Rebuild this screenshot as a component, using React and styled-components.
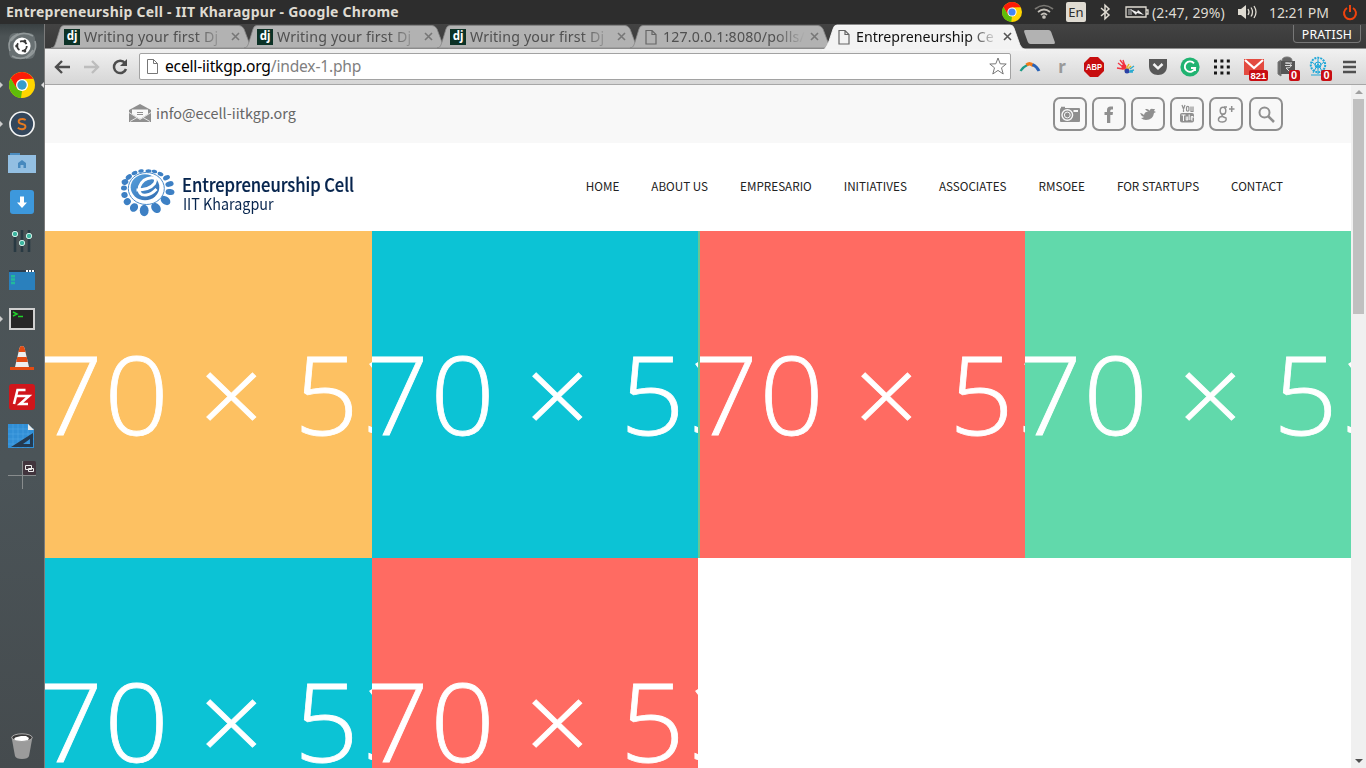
import React from "react";
import styled, { createGlobalStyle } from "styled-components";

const Global = createGlobalStyle`
  * { box-sizing: border-box; }
  body { margin: 0; overflow: hidden; }
  svg { display: block; flex: none; overflow: visible; }
`;

const ui = `"Noto Sans", "Open Sans", sans-serif`;
const site = `"Noto Sans CJK SC", "Noto Sans", sans-serif`;

const Screen = styled.div`
  width: 1366px;
  height: 768px;
  display: grid;
  grid-template: 24px 744px / 45px 1321px;
  overflow: hidden;
  background: #fff;
  font-family: ${ui};
`;

const MenuBar = styled.header`
  grid-column: 1 / 3;
  display: flex;
  align-items: center;
  background: #2d2d2d;
  color: #dfdbd2;
  white-space: nowrap;
`;
const WindowTitle = styled.div`
  font-size: 14px;
  font-weight: 700;
  line-height: 24px;
  padding-left: 6px;
  width: 1002px;
  letter-spacing: 0.25px;
`;
const Indicator = styled.div`
  display: flex;
  align-items: center;
  width: ${(p) => p.$w}px;
  height: 24px;
  flex: none;
  font-size: 14px;
  letter-spacing: ${(p) => p.$ls || 0}px;
`;
const Keyboard = styled.span`
  width: 20px;
  height: 20px;
  border-radius: 2px;
  background: #dfdbd2;
  color: #2d2d2d;
  font-size: 13px;
  line-height: 20px;
  text-align: center;
`;

const Launcher = styled.nav`
  display: flex;
  flex-direction: column;
  align-items: center;
  padding: 2px 0 3px;
  background: linear-gradient(#394042, #4c5355 12px, #4b5458 60%, #454b4e);
  border-right: 1px solid #7b7b7b;
`;
const LaunchItem = styled.div`
  position: relative;
  width: 44px;
  height: 39px;
  display: flex;
  align-items: center;
  justify-content: center;
  margin-top: ${(p) => (p.$last ? "auto" : 0)};
`;
const Marker = styled.i`
  position: absolute;
  top: 17px;
  ${(p) => (p.$right ? "right: 0; border-right: 3px solid #ddd;" : "left: 0; border-left: 3px solid #ccc;")}
  border-top: 3px solid transparent;
  border-bottom: 3px solid transparent;
`;

const Browser = styled.main`
  display: flex;
  flex-direction: column;
  min-width: 0;
`;
const TabStrip = styled.div`
  height: 25px;
  display: flex;
  background: linear-gradient(#434343, #393939);
  padding: 1px 5px 0 6px;
  border-bottom: 1px solid #8f8f8f;
`;
const TabBox = styled.div`
  position: relative;
  z-index: ${(p) => (p.$active ? 2 : 1)};
  width: 193px;
  flex: none;
  height: ${(p) => (p.$active ? 25 : 24)}px;
`;
const TabShape = styled.svg`
  position: absolute;
  left: 0;
  top: 0;
`;
const TabBody = styled.div`
  position: relative;
  display: flex;
  align-items: center;
  height: 23px;
  padding-left: 13px;
`;
const TabLabel = styled.span`
  width: 147px;
  margin-left: 4px;
  overflow: hidden;
  white-space: nowrap;
  font-size: 14.2px;
  line-height: 22px;
  letter-spacing: ${(p) => (p.$active ? 0 : 0.17)}px;
  color: ${(p) => (p.$active ? "#111" : "#505050")};
  mask-image: linear-gradient(90deg, #000 112px, transparent 142px);
`;
const NewTab = styled.div`
  width: 27px;
  height: 14px;
  margin: 5px 0 0 10px;
  background: #b2b2b2;
  border-radius: 2px;
  transform: skewX(20deg);
`;
const User = styled.div`
  margin-left: auto;
  width: 68px;
  height: 18px;
  border: 1px solid #777;
  border-top: 0;
  border-radius: 0 0 4px 4px;
  color: #fff;
  font-size: 12.3px;
  line-height: 20px;
  text-align: center;
  letter-spacing: 0.2px;
`;

const Toolbar = styled.div`
  height: 36px;
  display: flex;
  align-items: center;
  background: linear-gradient(#f1f1f1, #d6d6d6);
  border-bottom: 1px solid #a7a7a7;
  padding-left: 9px;
`;
const NavButtons = styled.div`
  display: flex;
  gap: 12px;
  width: 85px;
`;
const UrlBar = styled.div`
  width: 872px;
  height: 27px;
  margin-top: -1px;
  display: flex;
  align-items: center;
  border: 1px solid #a2a2a2;
  border-radius: 2px;
  background: #fff;
  padding: 0 3px 0 7px;
`;
const Url = styled.span`
  flex: 1;
  margin-left: 7px;
  font-size: 15.6px;
  line-height: 24px;
  letter-spacing: -0.19px;
  color: #808080;
  b { font-weight: 400; color: #000; }
`;
const Extensions = styled.div`
  display: grid;
  grid-template-columns: repeat(10, 32px);
  justify-items: center;
  margin: 0 9px 0 3px;
  align-items: center;
  height: 34px;
  flex: none;
`;
const Extension = styled.div`
  position: relative;
  display: flex;
  color: #999;
  font-size: 17px;
  font-weight: 700;
  line-height: 20px;
`;
const Count = styled.span`
  position: absolute;
  left: ${(p) => p.$x}px;
  bottom: ${(p) => p.$b}px;
  min-width: 11px;
  height: 11px;
  padding: 0 1.5px;
  border-radius: 2px;
  background: #c80d12;
  color: #fff;
  font: 700 ${(p) => p.$fs}px/11px "Liberation Sans", sans-serif;
  text-align: center;
`;

const Viewport = styled.div`
  display: flex;
  flex: 1;
  min-height: 0;
`;
const Page = styled.div`
  width: 1306px;
  overflow: hidden;
  font-family: ${site};
`;
const TopBar = styled.div`
  height: 58px;
  padding: 0 68px 0 84px;
  display: flex;
  align-items: center;
  background: #f8f8f8;
  color: #666;
`;
const Email = styled.span`
  margin-left: 5px;
  flex: 1;
  font-size: 14.4px;
  line-height: 22px;
  margin-top: -2px;
`;
const SocialLinks = styled.div`
  display: flex;
  gap: 5px;
`;
const Social = styled.span`
  width: 34px;
  height: 34px;
  border: 2px solid #8f8f8f;
  border-radius: 7px;
  display: flex;
  align-items: center;
  justify-content: center;
  margin-left: ${(p) => (p.$apart ? 1 : 0)}px;
`;
const SiteHeader = styled.div`
  height: 88px;
  display: flex;
  padding: 26px 68px 0 76px;
`;
const Brand = styled.div`
  flex: 1;
  display: flex;
  color: #06244d;
`;
const BrandText = styled.div`
  margin: 3px 0 0 7px;
  white-space: nowrap;
  transform: scaleX(0.895);
  transform-origin: 0 0;
`;
const BrandName = styled.div`
  font-size: 18.6px;
  font-weight: 500;
  line-height: 24px;
  letter-spacing: -0.1px;
  -webkit-text-stroke: 0.2px #06244d;
`;
const BrandPlace = styled.div`
  font-size: 16px;
  line-height: 18px;
  margin: -2px 0 0 1px;
`;
const Menu = styled.div`
  display: flex;
  gap: 32px;
  padding-top: 8px;
  font-size: 11.7px;
  line-height: 17px;
  color: #222;
  white-space: nowrap;
`;
const Tiles = styled.div`
  display: grid;
  grid-template-columns: repeat(4, 326.5px);
  grid-auto-rows: 326.5px;
`;
const Tile = styled.div`
  overflow: hidden;
  background: ${(p) => p.$bg};
  border-left: ${(p) => (p.$edge ? "2px solid #6cc592" : "0")};
`;
const TileSize = styled.div`
  width: 380px;
  margin-left: -73.5px;
  color: #fff;
  font: 300 109px/324px "Open Sans", sans-serif;
  white-space: pre;
  letter-spacing: 1.4px;
  word-spacing: -2.2px;
  -webkit-text-stroke: 0.8px #fff;
  transform: scaleX(1.04);
  transform-origin: 0 0;
  span { margin-left: 3.5px; }
`;
const Scrollbar = styled.div`
  width: 15px;
  display: flex;
  flex-direction: column;
  align-items: center;
  background: #f0f0f0;
  padding: 5px 0;
`;
const Arrow = styled.i`
  border: 4px solid transparent;
  border-top-width: ${(p) => (p.$down ? 4 : 0)}px;
  border-bottom-width: ${(p) => (p.$down ? 0 : 4)}px;
  border-${(p) => (p.$down ? "top" : "bottom")}-color: ${(p) => (p.$down ? "#505050" : "#a0a0a0")};
`;
const Thumb = styled.div`
  width: 11px;
  height: 215px;
  margin: 5px 0 auto 0;
  background: #c0c0c0;
`;

const Chrome = ({ s, mid = "#4286f5" }) => (
  <svg width={s} height={s} viewBox="0 0 26 26">
    <circle cx="13" cy="13" r="13" fill="#ffd500" />
    <path d="M13 13 7.5 16.5 1.8 6.5A13 13 0 0 1 24.3 6.7L13 7Z" fill="#fb1b08" />
    <path d="M1.8 6.5 7.6 16.2 13 19 12 26A13 13 0 0 1 1.8 6.5Z" fill="#5fbd0a" />
    <circle cx="13" cy="13" r="6" fill="#fff" />
    <circle cx="13" cy="13" r="4.7" fill={mid} />
  </svg>
);

const Doc = ({ c = "#666" }) => (
  <svg width="16" height="16" viewBox="0 0 16 16" fill="none" stroke={c} strokeWidth="1.2">
    <path d="M3 1.5h6l4 4V15H3ZM9 1.5v4h4" />
  </svg>
);
const DjangoMark = styled.span`
  width: 16px;
  height: 16px;
  flex: none;
  background: #0c3226;
  color: #fff;
  font: 700 11.5px/14px "Noto Sans", sans-serif;
  text-align: center;
`;
const Tab = ({ label, dj, active }) => (
  <TabBox $active={active}>
    <TabShape width="208" height="25" viewBox="0 0 208 25">
      <path
        d={active
          ? "M-1 25C3 24 4 21 6 16L10 4Q11 0 14 0H187Q190 0 191 3L197 20Q199 24 203 25Z"
          : "M0 23C3 23 4 20 5 17L9 4Q10 0.5 13 0.5H188Q191 .5 193 4L199 20Q200 23 204 23Z"}
        fill={active ? "#f3f3f3" : "#b2b2b2"}
        stroke={active ? "#f8f8f8" : "#878787"}
        strokeWidth=".8"
      />
    </TabShape>
    <TabBody>
      {dj ? <DjangoMark>dj</DjangoMark> : <Doc />}
      <TabLabel $active={active}>{label}</TabLabel>
      <svg width="9" height="9" viewBox="0 0 9 9" stroke={active ? "#555" : "#777"} strokeWidth="1.6">
        <path d="M1 1 8 8M8 1 1 8" />
      </svg>
    </TabBody>
  </TabBox>
);

const launchers = [
  { icon: (
    <svg width="28" height="28" viewBox="0 0 28 28">
      <rect x="1" y="1" width="26" height="26" rx="6" fill="#687072" />
      <path d="M3 9Q12-3 25 4M25 18Q17 31 4 24M2 19Q-2 7 10 2M27 9Q30 21 18 26" fill="none" stroke="#92999a" strokeWidth="1.6" />
      <circle cx="14" cy="14" r="8.6" fill="#fff" />
      <circle cx="14" cy="14" r="4.8" fill="none" stroke="#393939" strokeWidth="1.8" strokeDasharray="7.5 2.5" />
      <circle cx="8.7" cy="14" r="1.5" fill="#393939" /><circle cx="16.8" cy="9" r="1.5" fill="#393939" /><circle cx="16.8" cy="19" r="1.5" fill="#393939" />
    </svg>) },
  { left: true, right: true, icon: <Chrome s={26} mid="#369dcc" /> },
  { left: true, icon: (
    <svg width="26" height="26" viewBox="0 0 26 26">
      <circle cx="13" cy="13" r="12" fill="#34475c" stroke="#f4f4f4" strokeWidth="1.7" />
      <path d="M16.7 9Q14.7 7.8 12.8 8C8.5 8.3 8.8 12 12.4 12.8C18.5 14 17 18.2 13 18.2Q10.5 18.2 8.8 16.7" fill="none" stroke="#e67a20" strokeWidth="1.9" />
    </svg>) },
  { icon: (
    <svg width="28" height="22" viewBox="0 0 28 22">
      <path d="M2 1h10v4H2Z" fill="#4b8cbf" /><path d="M0 3h28v18H0Z" fill="#93bfe2" />
      <path d="M14 8 18 11V16H15.5V13H12.5V16H10V11Z" fill="#4789be" />
    </svg>) },
  { icon: (
    <svg width="24" height="24" viewBox="0 0 24 24">
      <rect width="24" height="24" rx="3" fill="#3d98dc" />
      <path d="M10 6.5h4v6h3L12 18 7 12.5h3Z" fill="#fff" />
    </svg>) },
  { icon: (
    <svg width="22" height="24" viewBox="0 0 22 24">
      <path d="M4 1v22M11 1v22M18 1v22" stroke="#293a43" strokeWidth="2.6" />
      <g fill="#3cb6a0" stroke="#d3eee7" strokeWidth="1"><circle cx="4" cy="5" r="2.7" /><circle cx="11" cy="14" r="2.7" /><circle cx="18" cy="7" r="2.7" /></g>
    </svg>) },
  { icon: (
    <svg width="26" height="20" viewBox="0 0 26 20">
      <path d="M0 0h26v20H0Z" fill="#2a80bd" /><path d="M0 0h26v2H0Z" fill="#2e3d4b" />
      <path d="M17 1h2M20 1h2M23 1h2" stroke="#fff" strokeWidth="2" />
      <path d="M2 6.2h4M2 9.5h4M2 13h4" stroke="#22b99c" strokeWidth="2.4" />
    </svg>) },
  { left: true, icon: (
    <svg width="26" height="22" viewBox="0 0 26 22">
      <path d="M1 1h24v20H1Z" fill="#262626" stroke="#d0d0d0" strokeWidth="2" />
      <path d="M4 4 8 6 4 8M9 8.5h5" fill="none" stroke="#20d12b" strokeWidth="1.5" />
    </svg>) },
  { icon: (
    <svg width="24" height="24" viewBox="0 0 24 24">
      <path d="M12 0Q10 0 9.5 2L5 21h14L14.5 2Q14 0 12 0Z" fill="#eee" />
      <path d="M12 0Q10 0 9.5 2L8.4 6h7.2l-1.1-4Q14 0 12 0ZM7.3 11h9.4l1.1 5H6.2ZM0 21h24v3H0Z" fill="#e34b12" />
    </svg>) },
  { icon: (
    <svg width="26" height="26" viewBox="0 0 26 26">
      <rect width="26" height="26" rx="3" fill="#d0161b" />
      <path d="M5 20 8.5 6h8M7 12h6.5M13 12h7L11 20h8" fill="none" stroke="#fff" strokeWidth="2.5" />
    </svg>) },
  { icon: (
    <svg width="28" height="24" viewBox="0 0 28 24">
      <path d="M0 0h20l6 6v18H0Z" fill="#318fd6" />
      <path d="M5 0v24M10 0v24M15 0v24M20 0v24M0 5h26M0 10h26M0 15h26M0 20h26" stroke="#55a8e5" strokeWidth=".5" />
      <path d="M3 23 25 9v14ZM15 20h7v-5Z" fill="#243a50" fillRule="evenodd" /><path d="M20 0v6h6Z" fill="#e9e9e9" />
    </svg>) },
  { icon: (
    <svg width="28" height="28" viewBox="0 0 28 28">
      <rect x="15" y="0" width="13" height="14" rx="1.5" fill="#41343d" />
      <path d="M14.5 0v28M0 14.5h28" stroke="#888c8d" />
      <path d="M17.5 4.5h6v4h-6ZM20.5 7.5h5v3h-5Z" fill="#41343d" stroke="#eee" />
    </svg>) },
  { last: true, icon: (
    <svg width="22" height="26" viewBox="0 0 22 26">
      <path d="M.5 4 4 23Q5 26 11 26t7-3L21.5 4Z" fill="#9b9b9b" />
      <ellipse cx="11" cy="4.5" rx="10.2" ry="3.7" fill="#393939" stroke="#aaa" />
      <path d="M3 6Q4 4 6 4L10 3L15 3L18 5L17 7Q11 9 4 7Z" fill="#fff" />
    </svg>) },
];

const tabs = [
  { label: "Writing your first Dj", dj: true },
  { label: "Writing your first Dj", dj: true },
  { label: "Writing your first Dj", dj: true },
  { label: "127.0.0.1:8080/polls/" },
  { label: "Entrepreneurship Ce", active: true },
];

const extensions = [
  <svg width="20" height="12" viewBox="0 0 20 12" key="a"><path d="M.5 10Q3 6 8 3.5" fill="none" stroke="#1d9b86" strokeWidth="2.2" /><path d="M6.5 4Q10 1 13.5 5" fill="none" stroke="#f17918" strokeWidth="3.2" /><path d="M12.5 3.5Q17 5.5 19 10" fill="none" stroke="#2862b6" strokeWidth="3" /></svg>,
  <span key="r">r</span>,
  <svg width="20" height="20" viewBox="0 0 20 20" key="b"><path d="M6 0h8l6 6v8l-6 6H6L0 14V6Z" fill="#c70d0e" /><text x="10" y="13.3" textAnchor="middle" fill="#fff" fontSize="9" textLength="16" lengthAdjust="spacingAndGlyphs" fontWeight="700" fontFamily="Liberation Sans">ABP</text></svg>,
  <svg width="20" height="16" viewBox="0 0 20 16" key="c"><path d="M2 4 7 8M4 1 8 6M7 1 9 7M1 9 7 10" stroke="#f33442" strokeWidth="1.3" /><ellipse cx="8" cy="8" rx="2.5" ry="2.7" fill="#f22e3b" /><path d="M9 12 13 5M10 12 15 7" stroke="#e5b329" strokeWidth="1.5" /><circle cx="11" cy="12" r="2.5" fill="#2b41a5" /><path d="M14 10 18 7M14 12 18 11M13 13 17 13" stroke="#2aaad0" strokeWidth="1.3" /></svg>,
  <svg width="20" height="18" viewBox="0 0 20 18" key="d"><path d="M1 1h18v7c0 6-4 9-9 9S1 14 1 8Z" fill="#585858" /><path d="m5.5 6 4.5 4.3L14.5 6" stroke="#f3f3f3" strokeWidth="2.5" fill="none" /></svg>,
  <svg width="20" height="20" viewBox="0 0 20 20" key="e"><circle cx="10" cy="10" r="9.6" fill="#20b371" /><path d="M14 6.3A5.2 5.2 0 1 0 15 11h-4m4 0v3" fill="none" stroke="#fff" strokeWidth="1.9" /></svg>,
  <svg width="16" height="16" viewBox="0 0 16 16" key="f"><path d="M0 2h16M0 8h16M0 14h16" stroke="#161616" strokeWidth="3" strokeDasharray="3 3.4" /></svg>,
  <React.Fragment key="g"><svg width="20" height="16" viewBox="0 0 20 16"><path d="M0 0h20v16H0Z" fill="#e34b40" /><path d="M1 1 10 9 19 1" fill="none" stroke="#fff" strokeWidth="2.2" /></svg><Count $x={5} $b={-6} $fs={9.5}>821</Count></React.Fragment>,
  <React.Fragment key="h"><svg width="19" height="20" viewBox="0 0 19 20"><path d="M5 4Q5 0 10 0t5 4M1 5l3-2v16l-3-2Z" fill="#666" stroke="#777" /><path d="M4 4h14v13H4Z" fill="#555" /><path d="M8 6h7M8 8.5h7M9 6q5 0 5 2.5T9 11l4 4" stroke="#ddd" fill="none" /></svg><Count $x={12} $b={-4} $fs={11}>0</Count></React.Fragment>,
  <React.Fragment key="i"><svg width="18" height="20" viewBox="0 0 18 20" fill="none" stroke="#1fa7d8"><circle cx="9" cy="8" r="7.2" strokeWidth="2" strokeDasharray="2 1" /><circle cx="9" cy="8" r="3" /><path d="M9 2v15M3 5l6 5 6-5M4 16l5-9 5 9M2 18h14" /></svg><Count $x={12} $b={-4} $fs={11}>0</Count></React.Fragment>,
];

const socialIcons = [
  <svg width="22" height="17" viewBox="0 0 22 17" key="a"><path d="M2 2V.8h4V2h14q1 0 1 1v12q0 1-1 1H2q-1 0-1-1V4q0-2 1-2Z" fill="#8f8f8f" /><circle cx="8.3" cy="9" r="5.3" fill="none" stroke="#f8f8f8" strokeWidth="1.4" /><circle cx="8.3" cy="9" r="2.9" fill="none" stroke="#f8f8f8" /><path d="M14.5 4h4.5v2h-4.5Z" fill="#f8f8f8" /></svg>,
  <svg width="10" height="17" viewBox="0 0 10 17" key="b"><path d="M3 17V9H.5V6H3V4Q3 .5 6.5.5H9v3H7.3Q6.3 3.5 6.3 5v1H9L8.6 9H6.3v8Z" fill="#8f8f8f" /></svg>,
  <svg width="16" height="13" viewBox="0 0 16 13" key="c"><path d="M0 5Q2 5 4 7Q5 3 9 4Q10 0 13 1L15 1L14 3L16 4L14 5Q13 12 6 12Q3 12 1 10Q3 10 4 9Q1 8 0 5ZM7 1Q9 1 10 4Q8 5 5 1Z" fill="#8f8f8f" /></svg>,
  <svg width="16" height="18" viewBox="0 0 16 18" key="d"><path d="m3 0 1.5 4L6 0M4.5 3v4M7.5 2.5q0-1.2 1.2-1.2t1.2 1.2V5q0 1.2-1.2 1.2T7.5 5ZM12 1.5v5h2v-5" fill="none" stroke="#8f8f8f" strokeWidth="1.2" /><rect x="1" y="8" width="14" height="9.5" rx="2" fill="#8f8f8f" /><path d="M2.5 10h4M4.5 10v6M7.2 11.5V15h1.5v-3.5M10.2 9.5V15M12 13h2v-1.5h-1.8V15h1.6" fill="none" stroke="#f8f8f8" /></svg>,
  <svg width="18" height="17" viewBox="0 0 18 17" key="e"><g fill="none" stroke="#8f8f8f" strokeWidth="1.5"><ellipse cx="6" cy="4.8" rx="2.8" ry="3.5" /><path d="M7 1h3M7.5 8Q4.5 8 5 9.5T9 12q1 3.5-3.5 4Q.8 16 1.5 13T6 10.5M12 3h5.5M14.7 0v6" /></g></svg>,
  <svg width="17" height="17" viewBox="0 0 17 17" key="f"><g fill="none" stroke="#8f8f8f" strokeWidth="2"><circle cx="6.5" cy="6.5" r="5" /><path d="m10 10 6 6" strokeWidth="2.5" /></g></svg>,
];

const petals = [
  [148, 171, 3, 1.7, 0], [140.5, 171, 2.8, 1.7, -10], [134, 173, 3, 2, -25], [128.3, 177, 3.4, 2.3, -35], [124.5, 182, 3.4, 2.8, -20], [123.5, 188, 3, 2.6, 5], [124, 195, 3.2, 3, -10],
  [126.8, 201.6, 3.6, 3.4, -40], [133.5, 207.5, 4.6, 3.8, -55], [143.7, 210.5, 5.8, 4.4, 90], [155.5, 208, 5.6, 4.2, 50], [165, 200.5, 5.4, 4, 40], [169.5, 192, 4.5, 3, 10], [169, 184, 4.2, 2.7, -15], [166, 177.7, 3.6, 2.3, -25], [160, 174, 3, 2, 25], [154, 171.5, 2.8, 1.7, 15],
];
const BrandMark = () => (
  <svg width="54" height="48" viewBox="120.5 169 54 48">
    <defs><linearGradient id="blue" x2="1" y2="1"><stop stopColor="#58a2dd" /><stop offset="1" stopColor="#306cb2" /></linearGradient></defs>
    {petals.map(([x, y, rx, ry, a], i) => <ellipse key={i} cx={x} cy={y} rx={rx} ry={ry} fill="#3d80c4" transform={`rotate(${a} ${x} ${y})`} />)}
    <ellipse cx="145.8" cy="188.5" rx="18" ry="16" fill="#fff" stroke="#4c8cca" strokeWidth="1" />
    <ellipse cx="144.5" cy="187.3" rx="14.3" ry="13" fill="url(#blue)" />
    <path d="M136 190Q149 190 154 183.5Q157 177.5 151 177.7Q142 178.5 139 186.5Q137 196 146 195Q151 194.5 156 189" fill="none" stroke="#fff" strokeWidth="2.9" />
  </svg>
);

const tiles = ["#fdc162", "#0cc3d5", "#ff6b62", "#61d9ab", "#0cc3d5", "#ff6b62"];
const menu = ["HOME", "ABOUT US", "EMPRESARIO", "INITIATIVES", "ASSOCIATES", "RMSOEE", "FOR STARTUPS", "CONTACT"];

export default function App() {
  return (
    <Screen>
      <Global />
      <MenuBar>
        <WindowTitle>Entrepreneurship Cell - IIT Kharagpur - Google Chrome</WindowTitle>
        <Indicator $w={32}><Chrome s={20} /></Indicator>
        <Indicator $w={32}>
          <svg width="20" height="14" viewBox="0 0 20 14" fill="none" stroke="#c5c1ba" strokeWidth="1.7"><path d="M1 4Q10-3 19 4" opacity=".5" /><path d="M4 7Q10 2 16 7M7 10Q10 7 13 10" /><circle cx="10" cy="12" r="1" fill="#ccc" /></svg>
        </Indicator>
        <Indicator $w={34}><Keyboard>En</Keyboard></Indicator>
        <Indicator $w={25}>
          <svg width="10" height="16" viewBox="0 0 10 16" fill="none" stroke="#dfdbd2" strokeWidth="1.5"><path d="m1 4 8 7-4 3.7V1.3L9 5l-8 7" /></svg>
        </Indicator>
        <Indicator $w={27}>
          <svg width="24" height="12" viewBox="0 0 24 12"><path d="M1 1h20v10H1ZM21 4h2v4h-2" fill="none" stroke="#dfdbd2" strokeWidth="1.3" /><path d="M3 3h4v6H3Z" fill="#777" /><path d="m5 3 7 3 1-2 6 5-7-2-1 2Z" fill="#eee" /></svg>
        </Indicator>
        <Indicator $w={85} $ls={0.15}>(2:47, 29%)</Indicator>
        <Indicator $w={32}>
          <svg width="20" height="16" viewBox="0 0 20 16"><path d="M1 5h3l5-4v14l-5-4H1Z" fill="#dfdbd2" /><path d="M11 5q2 3 0 6M14 3.5q3 4.5 0 9M17 2q4 6 0 12" fill="none" stroke="#dfdbd2" strokeWidth="1.3" /></svg>
        </Indicator>
        <Indicator $w={74} $ls={-0.1}>12:21 PM</Indicator>
        <Indicator $w={15}>
          <svg width="14" height="15" viewBox="0 0 14 15" fill="none" stroke="#ef430e" strokeWidth="2"><path d="M4 3a6 6 0 1 0 6 0M7 0v7" /></svg>
        </Indicator>
      </MenuBar>

      <Launcher>
        {launchers.map((l, i) => (
          <LaunchItem key={i} $last={l.last}>
            {l.left && <Marker />}
            {l.icon}
            {l.right && <Marker $right />}
          </LaunchItem>
        ))}
      </Launcher>

      <Browser>
        <TabStrip>
          {tabs.map((t, i) => <Tab key={i} {...t} />)}
          <NewTab />
          <User>PRATISH</User>
        </TabStrip>
        <Toolbar>
          <NavButtons>
            <svg width="17" height="16" viewBox="0 0 17 16" fill="none" stroke="#4d4d4d" strokeWidth="2.4"><path d="M8 2 2 8l6 6M2 8h14" /></svg>
            <svg width="17" height="16" viewBox="0 0 17 16" fill="none" stroke="#bdbdbd" strokeWidth="2.4"><path d="m9 2 6 6-6 6M1 8h14" /></svg>
            <svg width="16" height="16" viewBox="0 0 16 16"><path d="M13 4A6.2 6.2 0 1 0 14 10" fill="none" stroke="#4d4d4d" strokeWidth="2.5" /><path d="M15 0v7H8Z" fill="#4d4d4d" /></svg>
          </NavButtons>
          <UrlBar>
            <svg width="11" height="15" viewBox="0 0 11 15" fill="none" stroke="#777"><path d="M.5.5h6l4 4v10H.5ZM6.5.5v4h4" /></svg>
            <Url><b>ecell-iitkgp.org</b>/index-1.php</Url>
            <svg width="18" height="18" viewBox="0 0 18 18" fill="none" stroke="#777"><path d="m9 1 2.2 5.8 6 .2-4.7 3.8L14.2 17 9 13.4 3.8 17l1.7-6.2L.8 7l6-.2Z" /></svg>
          </UrlBar>
          <Extensions>{extensions.map((e, i) => <Extension key={i}>{e}</Extension>)}</Extensions>
          <svg width="13" height="14" viewBox="0 0 13 14" stroke="#505050" strokeWidth="2.5"><path d="M0 2h13M0 7h13M0 12h13" /></svg>
        </Toolbar>
        <Viewport>
          <Page>
            <TopBar>
              <svg width="22" height="18" viewBox="0 0 22 18"><path d="M0 5 11-1 22 5V17H0Z" fill="#8f8f8f" /><path d="M3 4.5h16v4.5L11 14 3 9Z" fill="#f8f8f8" /><path d="M8 7.5h6M8 9.5h6" stroke="#8f8f8f" /><path d="m0 7.5 11 7 11-7M1 16.5l7-4M21 16.5l-7-4" fill="none" stroke="#f8f8f8" strokeWidth=".8" /></svg>
              <Email>info@ecell-iitkgp.org</Email>
              <SocialLinks>{socialIcons.map((s, i) => <Social key={i} $apart={i === 5}>{s}</Social>)}</SocialLinks>
            </TopBar>
            <SiteHeader>
              <Brand>
                <BrandMark />
                <BrandText>
                  <BrandName>Entrepreneurship Cell</BrandName>
                  <BrandPlace>IIT Kharagpur</BrandPlace>
                </BrandText>
              </Brand>
              <Menu>{menu.map((m) => <span key={m}>{m}</span>)}</Menu>
            </SiteHeader>
            <Tiles>{tiles.map((c, i) => <Tile key={i} $bg={c} $edge={i === 2}><TileSize>570 × 5<span>3</span></TileSize></Tile>)}</Tiles>
          </Page>
          <Scrollbar><Arrow /><Thumb /><Arrow $down /></Scrollbar>
        </Viewport>
      </Browser>
    </Screen>
  );
}
